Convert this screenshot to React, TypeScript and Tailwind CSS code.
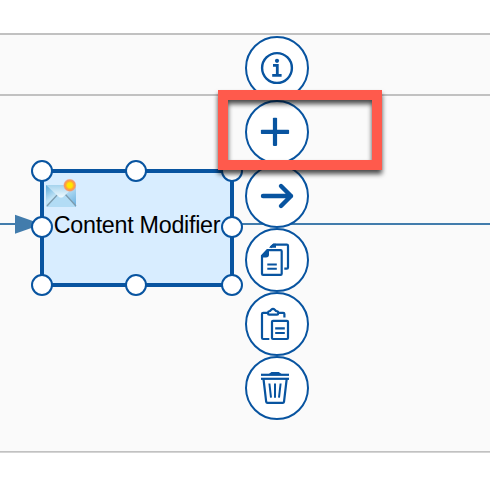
import type { ReactNode } from "react";

const handles = [
  "left-[31px] top-[160px]",
  "left-[125px] top-[160px]",
  "left-[221px] top-[160px]",
  "left-[31px] top-[216px]",
  "left-[221px] top-[216px]",
  "left-[31px] top-[274px]",
  "left-[125px] top-[274px]",
  "left-[221px] top-[274px]",
];

function Icon({ children }: { children: ReactNode }) {
  return (
    <svg className="size-full" viewBox="0 0 60 60" fill="none" stroke="#0854a0" strokeWidth="2.2">
      {children}
    </svg>
  );
}

function InfoIcon() {
  return (
    <Icon>
      <circle cx="30" cy="30" r="14.9" strokeWidth="2.4" />
      <circle cx="30" cy="22.8" r="2.1" fill="#0854a0" stroke="none" />
      <path d="M26 27.4H30.3V37.4M25.2 37.4H34.6" strokeWidth="2.8" />
    </Icon>
  );
}

function PlusIcon() {
  return (
    <Icon>
      <rect x="25.9" y="15.7" width="4.2" height="28.2" rx=".8" fill="#0854a0" stroke="none" />
      <rect x="13.9" y="27.8" width="28.2" height="4.2" rx=".8" fill="#0854a0" stroke="none" />
    </Icon>
  );
}

function ArrowIcon() {
  return (
    <Icon>
      <path d="M16 30H44M34 20L44 30L34 40" strokeWidth="4.4" strokeLinecap="round" strokeLinejoin="round" />
    </Icon>
  );
}

function CopyIcon() {
  return (
    <Icon>
      <path d="M15 26L20.5 20.2H33.6Q34.7 20.2 34.7 21.3V43.7Q34.7 44.8 33.6 44.8H16.1Q15 44.8 15 43.7Z" />
      <path d="M14 27.5V25.5L20 19.2H22V24.5Q22 27.5 19 27.5Z" fill="#0854a0" stroke="none" />
      <path d="M23.5 17.3L26.8 14.7H39.8Q41 14.7 41 15.8V37.5Q41 38.6 39.8 38.6H37.3" />
      <path d="M22 17.7L26 13.7H29V17.7Z" fill="#0854a0" stroke="none" />
      <path d="M20.3 34.4H29.8M20.3 38.7H29.8" strokeWidth="2" />
    </Icon>
  );
}

function PasteIcon() {
  return (
    <Icon>
      <path d="M22.3 45H16.2Q15 45 15 43.8V20Q15 18.9 16.2 18.9H20.5M31.5 18.9H36.2Q37.4 18.9 37.4 20V23.5" />
      <path d="M21 19.5V18.4Q21 17.3 23 17L24.2 15.7Q26 14 27.8 15.7L29 17Q31.2 17.3 31.2 18.4V19.5Q31.2 20.6 30 20.6H22.2Q21 20.6 21 19.5Z" />
      <rect x="25" y="26.8" width="16" height="18.2" rx="1" />
      <path d="M28.2 34.3H37.8M28.2 39H37.8" />
    </Icon>
  );
}

function TrashIcon() {
  return (
    <Icon>
      <path d="M14 16.8H42" />
      <path d="M23.5 16L24.8 15H31.4L32.7 16Z" fill="#0854a0" />
      <path d="M14 20.8H42" />
      <path d="M16.5 21L19.2 43.8Q19.4 44.9 20.4 44.9H35.8Q36.8 44.9 37 43.8L39.7 21" />
      <path d="M22.4 25.5L24 39.7M28 25.5V39.7M33.6 25.5L32 39.7" strokeWidth="2" />
    </Icon>
  );
}

function Envelope() {
  return (
    <svg className="absolute left-[1px] top-[6px] h-8 w-9" viewBox="0 0 36 32">
      <defs>
        <linearGradient id="paper" x2="1" y2="1">
          <stop stopColor="#5aa9d9" />
          <stop offset=".4" stopColor="#c3e5f7" />
          <stop offset="1" stopColor="#65aee0" />
        </linearGradient>
        <linearGradient id="flap" x2="0" y2="1">
          <stop stopColor="#a5d3ed" />
          <stop offset="1" stopColor="#f0faff" />
        </linearGradient>
        <radialGradient id="spark">
          <stop offset=".35" stopColor="#ffe600" />
          <stop offset=".6" stopColor="#ffa532" />
          <stop offset=".8" stopColor="#f4956a" />
          <stop offset="1" stopColor="#f4a48a" stopOpacity="0" />
        </radialGradient>
      </defs>
      <path d="M1 6H31V28H1Z" fill="url(#paper)" />
      <path d="M2 28L13 15H20L31 28Z" fill="#b2dcf5" />
      <path d="M2 27L13 15M31 27L20 15" stroke="#7e9cae" strokeWidth="1.3" />
      <path d="M1 6H31L18 18Q16 19 14 18Z" fill="url(#flap)" />
      <circle cx="24.8" cy="6.3" r="6.8" fill="url(#spark)" />
    </svg>
  );
}

const actions = [
  { label: "Information", icon: <InfoIcon /> },
  { label: "Add", icon: <PlusIcon /> },
  { label: "Connect", icon: <ArrowIcon /> },
  { label: "Copy", icon: <CopyIcon /> },
  { label: "Paste", icon: <PasteIcon /> },
  { label: "Delete", icon: <TrashIcon /> },
];

export default function App() {
  return (
    <main className="relative flex h-[496px] w-[490px] flex-col overflow-hidden bg-white pt-[33px] font-['Liberation_Sans',Arial,sans-serif]">
      <div className="h-[61px] border-t-2 border-[#c1c1c1] bg-[#fafafa]" />
      <div className="h-[357px] border-t-2 border-[#c1c1c1] bg-[#fafafa]" />
      <div className="h-px bg-[#c1c1c1]" />
      <div className="h-px bg-[#d4d4d4]" />

      {/* Message flow */}
      <svg className="absolute left-0 top-[210px] h-7 w-full" viewBox="0 0 490 28">
        <path d="M0 14H490" stroke="#427cac" strokeWidth="2" />
        <path d="M15 4.8L42 14.3L15 23.8Z" fill="#427cac" />
      </svg>

      <section className="absolute left-10 top-[169px] flex h-[118px] w-[194px] items-center justify-center border-4 border-[#0854a0] bg-[#d8edff]">
        <Envelope />
        <span className="mb-[5px] whitespace-nowrap text-[23.3px] leading-none tracking-[-0.28px] text-black">Content Modifier</span>
      </section>
      {handles.map((place) => (
        <span key={place} className={`absolute size-[22px] rounded-full border-2 border-[#0854a0] bg-white ${place}`} />
      ))}

      <nav className="absolute left-[245px] top-9 flex flex-col">
        {actions.map(({ label, icon }) => (
          <button key={label} aria-label={label} className="size-16 rounded-full border-2 border-[#0854a0] bg-white">
            {icon}
          </button>
        ))}
      </nav>

      {/* Highlight frame */}
      <div className="absolute left-[218px] top-[90px] h-20 w-[164px] border-10 border-[#ff5a4c] [filter:drop-shadow(0_4px_2.5px_rgba(0,0,0,0.7))]" />
    </main>
  );
}
